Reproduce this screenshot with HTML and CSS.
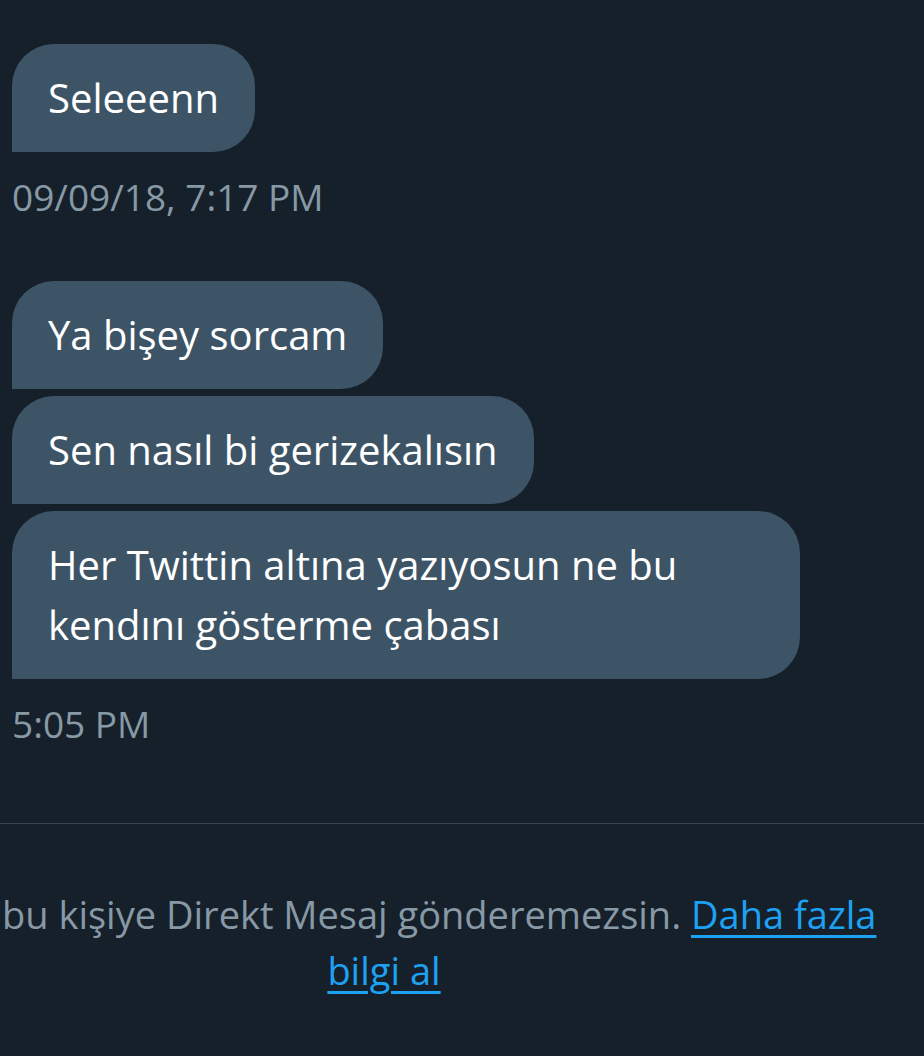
FILE: index.html
```html
<!DOCTYPE html>
<html lang="tr">
<head>
<meta charset="utf-8">
<link rel="stylesheet" href="styles.css">
</head>
<body>
<main class="thread">
  <section class="group group-first">
    <div class="bubble">Seleeenn</div>
    <div class="time">09/09/18, 7:17 PM</div>
  </section>
  <section class="group">
    <div class="bubble">Ya bişey sorcam</div>
    <div class="bubble">Sen nasıl bi gerizekalısın</div>
    <div class="bubble wide">Her Twittin altına yazıyosun ne bu kendını gösterme çabası</div>
    <div class="time">5:05 PM</div>
  </section>
</main>
<footer class="notice">
  <p class="notice-text">bu kişiye Direkt Mesaj gönderemezsin. <a href="#" class="link">Daha fazla<br>bilgi al</a></p>
</footer>
</body>
</html>
```
FILE: styles.css
```css
html, body {
  margin: 0;
  padding: 0;
  background: #16202a;
}
body {
  width: 924px;
  height: 1056px;
  overflow: hidden;
  font-family: "Open Sans", "Noto Sans", sans-serif;
  color: #ffffff;
}
.thread {
  padding: 44px 0 0 12px;
  display: flex;
  flex-direction: column;
}
.group {
  display: flex;
  flex-direction: column;
  align-items: flex-start;
  gap: 7px;
}
.group-first {
  margin-bottom: 58px;
}
.bubble {
  background: #3d5466;
  border-radius: 42px 42px 42px 0;
  padding: 24px 36px 24px 36px;
  font-size: 40px;
  line-height: 60px;
  color: #ffffff;
  max-width: 716px;
  box-sizing: content-box;
}
.bubble.wide {
  width: 716px;
}
.time {
  margin-top: 12px;
  font-size: 37px;
  line-height: 52px;
  color: #8899a6;
}
.notice {
  margin-top: 73px;
  border-top: 1px solid #38444d;
  padding-top: 62px;
}
.notice-text {
  margin: 0;
  width: 764px;
  padding-left: 2px;
  text-align: center;
  white-space: nowrap;
  font-size: 38px;
  line-height: 56px;
  color: #8899a6;
}
.link {
  color: #1da1f2;
  text-decoration: underline;
  text-decoration-thickness: 3px;
  text-underline-offset: 6px;
}
```
